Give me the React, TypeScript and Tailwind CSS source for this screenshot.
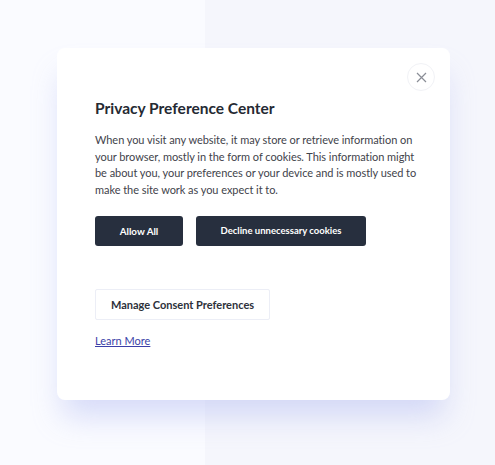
import React from "react";

export default function App() {
  return (
    <div
      className="relative w-[495px] h-[465px] overflow-hidden flex"
      style={{ fontFamily: "Lato, 'Open Sans', sans-serif" }}
    >
      <div className="w-[205px] h-full bg-[#fafbff]" />
      <div className="flex-1 h-full bg-[#f5f6fc]" />

      <div className="absolute left-[57px] top-[48px] w-[393px] h-[352px] rounded-[8px] bg-white shadow-[0_22px_30px_-6px_rgba(170,180,240,0.45)]">
        <button className="absolute right-[15px] top-[15px] w-[28px] h-[28px] rounded-full border border-[#f1f2f6] flex items-center justify-center text-[#8a8d96]">
          <svg width="11" height="11" viewBox="0 0 11 11" fill="none" stroke="currentColor" strokeWidth="1.2">
            <path d="M1 1 L10 10 M10 1 L1 10" />
          </svg>
        </button>

        <div className="pl-[38px] pr-[20px] pt-[49px] flex flex-col items-start">
          <h2 className="text-[15.5px] leading-[22px] font-bold text-[#252a33]">
            Privacy Preference Center
          </h2>
          <p className="mt-[13px] text-[11px] leading-[16.6px] text-[#3f434b] whitespace-nowrap tracking-[-0.05px]">
            When you visit any website, it may store or retrieve information on
            <br />
            your browser, mostly in the form of cookies. This information might
            <br />
            be about you, your preferences or your device and is mostly used to
            <br />
            make the site work as you expect it to.
          </p>
          <div className="mt-[18px] flex gap-[13px]">
            <button className="w-[88px] h-[30px] rounded-[3px] bg-[#272f3e] text-white text-[9.8px] font-bold">
              Allow All
            </button>
            <button className="w-[170px] h-[30px] rounded-[3px] bg-[#272f3e] text-white text-[9.5px] font-bold">
              Decline unnecessary cookies
            </button>
          </div>
          <button className="mt-[43px] w-[175px] h-[31px] border border-[#eceef6] rounded-[2px] bg-white text-[11px] font-bold text-[#2d313a]">
            Manage Consent Preferences
          </button>
          <a className="mt-[14px] text-[11px] leading-[14px] text-[#3b3fa8] underline">
            Learn More
          </a>
        </div>
      </div>
    </div>
  );
}
